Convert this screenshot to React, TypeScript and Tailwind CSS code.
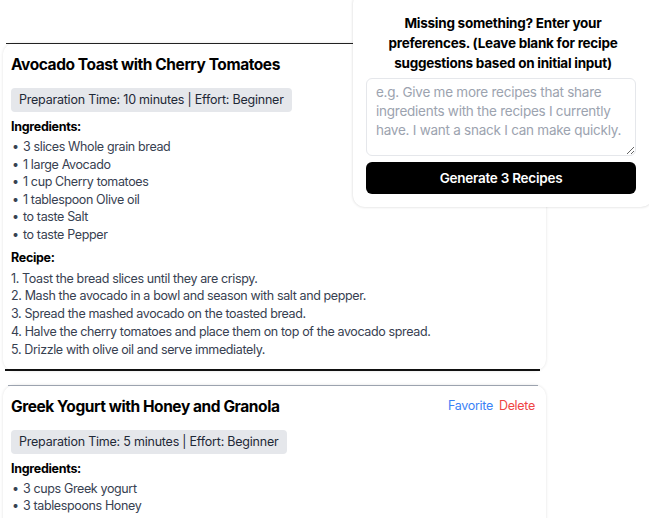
import React from "react";

type Recipe = {
  title: string;
  time: string;
  ingredients: string[];
  steps?: string[];
};

const recipes: Recipe[] = [
  {
    title: "Avocado Toast with Cherry Tomatoes",
    time: "10 minutes",
    ingredients: [
      "3 slices Whole grain bread",
      "1 large Avocado",
      "1 cup Cherry tomatoes",
      "1 tablespoon Olive oil",
      "to taste Salt",
      "to taste Pepper",
    ],
    steps: [
      "Toast the bread slices until they are crispy.",
      "Mash the avocado in a bowl and season with salt and pepper.",
      "Spread the mashed avocado on the toasted bread.",
      "Halve the cherry tomatoes and place them on top of the avocado spread.",
      "Drizzle with olive oil and serve immediately.",
    ],
  },
  {
    title: "Greek Yogurt with Honey and Granola",
    time: "5 minutes",
    ingredients: ["3 cups Greek yogurt", "3 tablespoons Honey"],
  },
];

function Card({ r, first }: { r: Recipe; first: boolean }) {
  return (
    <div className="rounded-xl bg-white shadow-[0_0_3px_rgba(0,0,0,0.12)]">
      <div
        className={
          first
            ? "ml-[3px] mr-[3px] h-px bg-[#222]"
            : "ml-[5px] mr-[8px] h-px bg-[#9ca3af]"
        }
      />
      <div className={r.steps ? "px-[8px] pt-[7px]" : "px-[8px] pb-[40px] pt-[7px]"}>
        <div className="flex items-center justify-between">
          <h2 className="text-[15.5px] font-bold leading-7 tracking-[-0.43px] text-black">
            {r.title}
          </h2>
          <div className="flex gap-[6px] pr-[3px] text-[12.5px] tracking-[-0.3px]">
            <span className="text-[#3b82f6]">Favorite</span>
            <span className="text-[#ef4444]">Delete</span>
          </div>
        </div>
        <div className="mt-[9px] flex">
          <span className="rounded-[4px] bg-[#e5e7eb] px-2 py-[2px] text-[12.5px] leading-5 tracking-[-0.22px] text-[#1f2937]">
            Preparation Time: {r.time} | Effort: Beginner
          </span>
        </div>
        <h3 className="mt-[5px] text-[12.5px] font-bold leading-5 tracking-[-0.3px] text-black">
          Ingredients:
        </h3>
        <ul className="mt-[1px]">
          {r.ingredients.map((i) => (
            <li
              key={i}
              className="flex text-[12.5px] leading-[17.6px] tracking-[-0.37px] text-[#374151]"
            >
              <span className="w-[12px] pl-[1px]">•</span>
              <span>{i}</span>
            </li>
          ))}
        </ul>
        {r.steps && (
          <>
            <h3 className="mt-[4px] text-[12.5px] font-bold leading-5 tracking-[-0.3px] text-black">
              Recipe:
            </h3>
            <ol className="mt-[2px] pb-[10px]">
              {r.steps.map((s, idx) => (
                <li
                  key={s}
                  className="text-[12.5px] leading-[17.8px] tracking-[-0.37px] text-[#374151]"
                >
                  {idx + 1}. {s}
                </li>
              ))}
            </ol>
          </>
        )}
      </div>
      {first && <div className="ml-[2px] mr-[6px] h-[2px] bg-[#111]" />}
    </div>
  );
}

export default function App() {
  return (
    <div
      className="relative h-[518px] w-[649px] overflow-hidden bg-white"
      style={{ fontFamily: "Inter, 'Noto Sans', sans-serif" }}
    >
      <div className="flex w-[546px] flex-col gap-[14px] pl-[3px] pt-[43px]">
        {recipes.map((r, i) => (
          <Card key={r.title} r={r} first={i === 0} />
        ))}
      </div>

      <div className="absolute -top-2 left-[353px] w-[300px] rounded-xl bg-white px-[13px] pb-[13px] pt-[21px] shadow-[0_0_3px_rgba(0,0,0,0.18)]">
        <p className="text-center text-[13.5px] font-bold leading-5 tracking-[-0.25px] text-black">
          Missing something? Enter your preferences. (Leave blank for recipe suggestions based on initial input)
        </p>
        <textarea
          className="mt-[5px] block h-[78px] w-[270px] resize-y rounded-md border border-[#e5e7eb] px-[9px] py-[4px] text-[13.5px] leading-[19.2px] tracking-[-0.25px] text-[#374151] outline-none placeholder:text-[#9ca3af]"
          placeholder="e.g. Give me more recipes that share ingredients with the recipes I currently have. I want a snack I can make quickly."
        />
        <button className="mt-[6px] flex h-[32px] w-[270px] items-center justify-center rounded-md bg-black text-[13.5px] font-semibold tracking-[-0.25px] text-white">
          Generate 3 Recipes
        </button>
      </div>
    </div>
  );
}
